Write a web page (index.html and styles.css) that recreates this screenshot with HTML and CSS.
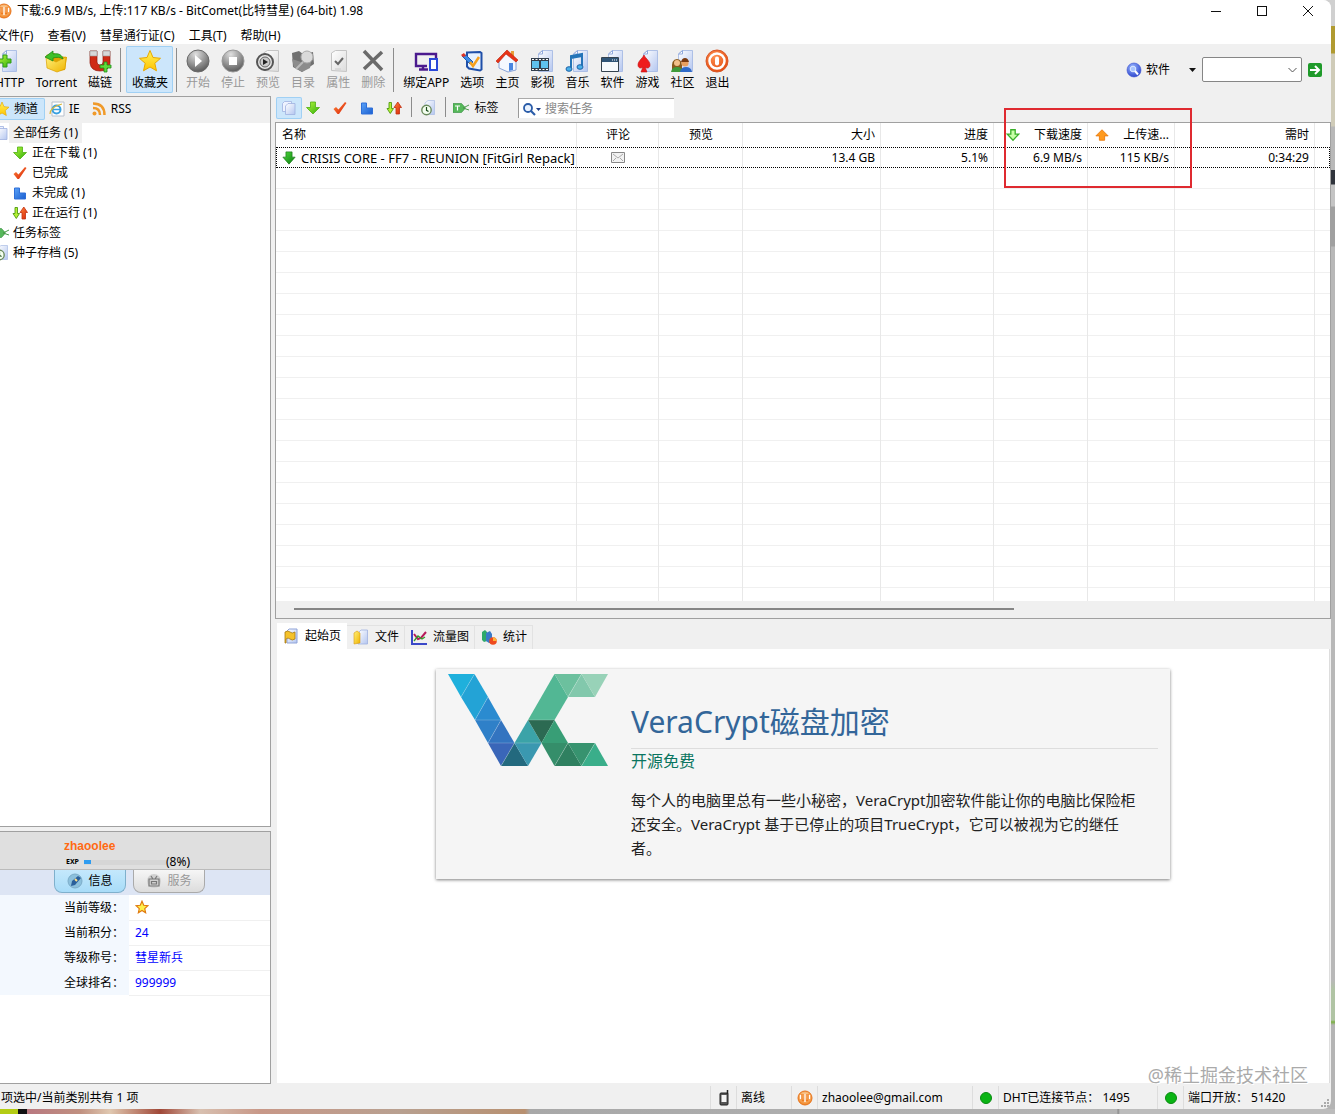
FILE: index.html
```html
<!DOCTYPE html>
<html lang="zh-CN">
<head>
    <meta charset="UTF-8">
    <meta name="viewport" content="width=device-width, initial-scale=1.0">
    <title>BitComet(比特彗星) (64-bit) 1.98</title>
    <link rel="stylesheet" href="styles.css">
</head>
<body>
    <!-- shared icons -->
    <svg class="defs" width="0" height="0">
        <defs>
            <linearGradient id="g-green" x1="0" y1="0" x2="1" y2="1"><stop offset="0" stop-color="#b8f83c"/><stop offset="1" stop-color="#2fae0c"/></linearGradient>
            <linearGradient id="g-dark" x1="0" y1="0" x2="1" y2="1"><stop offset="0" stop-color="#4fdc3a"/><stop offset="1" stop-color="#0b7a12"/></linearGradient>
            <linearGradient id="g-red" x1="0" y1="0" x2="1" y2="1"><stop offset="0" stop-color="#ff8a3c"/><stop offset="1" stop-color="#d81e05"/></linearGradient>
            <linearGradient id="g-blue" x1="0" y1="0" x2="1" y2="1"><stop offset="0" stop-color="#5aa2f8"/><stop offset="1" stop-color="#1b5fd0"/></linearGradient>
            <linearGradient id="g-page" x1="0" y1="0" x2="1" y2="1"><stop offset="0" stop-color="#ffffff"/><stop offset="1" stop-color="#b4c6f0"/></linearGradient>
            <linearGradient id="g-star" x1="0" y1="0" x2="0" y2="1"><stop offset="0" stop-color="#fff25a"/><stop offset="1" stop-color="#ffc400"/></linearGradient>
            <linearGradient id="g-folder" x1="0" y1="0" x2="1" y2="1"><stop offset="0" stop-color="#fff07a"/><stop offset="1" stop-color="#f0b400"/></linearGradient>
            <linearGradient id="g-white" x1="0" y1="0" x2="1" y2="1"><stop offset="0" stop-color="#fff"/><stop offset="1" stop-color="#dcdcdc"/></linearGradient>
            <radialGradient id="g-gray" cx=".4" cy=".2" r=".8"><stop offset="0" stop-color="#e0e0e0"/><stop offset="1" stop-color="#5c5c5c"/></radialGradient>
            <radialGradient id="g-orange" cx=".4" cy=".3" r=".8"><stop offset="0" stop-color="#ff9050"/><stop offset="1" stop-color="#e04408"/></radialGradient>
            <radialGradient id="g-ball" cx=".4" cy=".3" r=".8"><stop offset="0" stop-color="#9ab8ff"/><stop offset="1" stop-color="#2038c8"/></radialGradient>
            <radialGradient id="g-comet" cx=".5" cy=".4" r=".6"><stop offset="0" stop-color="#fff0d0"/><stop offset="1" stop-color="#f0801c"/></radialGradient>
        </defs>
        <symbol id="i-down" viewBox="0 0 16 16"><path d="M5.500 2h5v5.500h4L8 14 1.500 7.500h4z" fill="url(#g-green)" stroke="#4fb012" stroke-width=".8"/></symbol>
        <symbol id="i-downdark" viewBox="0 0 16 16"><path d="M4.500 1h7v6H15l-7 8-7-8h3.500z" fill="url(#g-dark)" stroke="#1b7a1b" stroke-width=".8"/></symbol>
        <symbol id="i-tick" viewBox="0 0 16 16"><path d="M1.500 9l2.500-2 2.500 2.500L13 2l1.500 1L7 14H5.500z" fill="url(#g-red)"/></symbol>
        <symbol id="i-flag" viewBox="0 0 16 16"><path d="M2.500 3h5v5h6v6h-11z" fill="url(#g-blue)" stroke="#2f6fd8"/></symbol>
        <symbol id="i-updown" viewBox="0 0 16 16"><path d="M3 2.500h2.500v6h2L4.300 13.500 1 8.500h2z" fill="#b4f032" stroke="#4f9a12" stroke-width=".9"/><path d="M10 14h3.500V7.500h2L11.800 2 8 7.500h2z" fill="url(#g-red)" stroke="#c03010" stroke-width=".8"/></symbol>
        <symbol id="i-pages" viewBox="0 0 16 16"><path d="M1.500 3.500l2-2h7v10h-9z" fill="#eef3ff" stroke="#9fb1e0" stroke-width=".8"/><path d="M4.500 6L7 3.500h7v11H4.500z" fill="url(#g-page)" stroke="#9fb1e0" stroke-width=".8"/></symbol>
        <symbol id="i-tag" viewBox="0 0 16 14"><path d="M0 2.500h8.500l4 4.500-4 4.500H0z" fill="#56b85a" stroke="#2f8a3a" stroke-width=".6"/><path d="M2 5h5M4.500 5v4.500" stroke="#fff" stroke-width="1.200"/><path d="M10 7l6-3M10 7l6 2" stroke="#4a9a4a" fill="none"/></symbol>
        <symbol id="i-star" viewBox="0 0 24 24"><path d="M12 1.500l3 7 7.500.8-5.700 5 1.700 7.500L12 18l-6.500 3.800 1.700-7.500-5.700-5L9 8.500z" fill="url(#g-star)" stroke="#e8a800"/></symbol>
        <symbol id="i-level" viewBox="0 0 24 24"><path d="M12 2l3 7 7 .8-5.300 5 1.500 7L12 18l-6.200 3.800 1.500-7L2 9.800 9 9z" fill="#fff04a" stroke="#e07a10" stroke-width="2"/></symbol>
        <symbol id="i-clock" viewBox="0 0 16 16"><path d="M5 3l3-2.500h6.500v14H5z" fill="url(#g-page)" stroke="#a9bce4" stroke-width=".7"/><circle cx="6.500" cy="10" r="4.700" fill="#f4fff0" stroke="#6a8a5c" stroke-width="1.400"/><path d="M6.500 7v3.300l2 1.200" stroke="#1d4a1d" fill="none" stroke-width="1.200"/></symbol>
        <symbol id="i-comet" viewBox="0 0 16 16"><circle cx="8" cy="8" r="7" fill="url(#g-comet)" stroke="#e8741c"/><path d="M5 4v5q0 2 1 2t1-2V4M9 4v5q0 2 1 2t1-2V4" fill="none" stroke="#f07818" stroke-width="1.200"/><path d="M3.500 5v4M8 4v8M12.500 5v4" stroke="#fff" stroke-width="1.200"/></symbol>
        <symbol id="i-sheet" viewBox="0 0 24 24"><path d="M8.500 5l4-3.500h10v21h-14z" fill="url(#g-page)" stroke="#9fb5e2" stroke-width=".8"/><path d="M8.500 5h4V1.500z" fill="#fff" stroke="#8fa8dd"/></symbol>
        <symbol id="i-graysheet" viewBox="0 0 24 24"><path d="M5.500 4l4-2.500h11v21l-15-1z" fill="url(#g-white)" stroke="#c4c4c4"/></symbol>
    </svg>

    <div class="desktop">
    <div class="window">
        <header class="titlebar">
            <svg class="icon16"><use href="#i-comet"/></svg>
            <h1>下载:6.9 MB/s, 上传:117 KB/s - BitComet(比特彗星) (64-bit) 1.98</h1>
            <div class="win-buttons">
                <button aria-label="最小化"><svg viewBox="0 0 12 12"><path d="M1 6.500h10"/></svg></button>
                <button aria-label="最大化"><svg viewBox="0 0 12 12"><rect x="1.500" y="1.500" width="9" height="9"/></svg></button>
                <button aria-label="关闭"><svg viewBox="0 0 12 12"><path d="M1 1l10 10M11 1L1 11"/></svg></button>
            </div>
        </header>

        <nav class="menubar">
            <button>文件(F)</button>
            <button>查看(V)</button>
            <button>彗星通行证(C)</button>
            <button>工具(T)</button>
            <button>帮助(H)</button>
        </nav>

        <div class="toolbar">
            <button class="tool">
                <svg viewBox="0 0 24 24"><use href="#i-sheet" x="-4" width="24" height="24"/><path d="M5 6h4v4h4v4H9v4H5v-4H1v-4h4z" fill="url(#g-green)" stroke="#2f9a1a"/></svg>
                <span>HTTP</span>
            </button>
            <button class="tool">
                <svg viewBox="0 0 24 24"><path d="M2 6l8-2 4 3 9 1-2 13-8 1z" fill="#e0a400"/><path d="M2 8l10 5 10-5-1 12-8 3-10-4z" fill="url(#g-folder)" stroke="#dba100" stroke-width=".7"/><path d="M1 8l8-6v3c6-1 9 1 10 5-3-2-6-2-10-1v3z" fill="#3ec02a" stroke="#1d8a18" stroke-width=".8"/></svg>
                <span>Torrent</span>
            </button>
            <button class="tool">
                <svg viewBox="0 0 24 24"><path d="M2 2h7v11q0 3 3 3t3-3V2h7v12q-1 8-10 8T2 14z" fill="#cf2a14" stroke="#8f1408" stroke-width=".7"/><path d="M2 2h7v5H2zM15 2h7v5h-7z" fill="#d8d8d8" stroke="#999" stroke-width=".6"/><path d="M16 13h3v3h4v3h-4v4h-3v-4h-4v-3h4z" fill="#5ddc3a" stroke="#1f8a18" stroke-width=".8"/></svg>
                <span>磁链</span>
            </button>
            <i class="sep"></i>
            <button class="tool active">
                <svg><use href="#i-star"/></svg>
                <span>收藏夹</span>
            </button>
            <i class="sep"></i>
            <button class="tool" disabled>
                <svg viewBox="0 0 24 24"><circle cx="12" cy="12" r="11" fill="url(#g-gray)" stroke="#6a6a6a"/><path d="M9 6l7 6-7 6z" fill="#fff"/></svg>
                <span>开始</span>
            </button>
            <button class="tool" disabled>
                <svg viewBox="0 0 24 24"><circle cx="12" cy="12" r="11" fill="url(#g-gray)" stroke="#9a9a9a"/><path d="M8 8h8v8H8z" fill="#fff"/></svg>
                <span>停止</span>
            </button>
            <button class="tool" disabled>
                <svg viewBox="0 0 24 24"><use href="#i-graysheet" x="2" width="24" height="24"/><circle cx="9" cy="13" r="8" fill="#e4e4e4" stroke="#555" stroke-width="2"/><circle cx="9" cy="13" r="5" fill="#ccc" stroke="#666"/><path d="M7 10l5 3-5 3z" fill="#222"/></svg>
                <span>预览</span>
            </button>
            <button class="tool" disabled>
                <svg viewBox="0 0 24 24"><path d="M1 4l7-2 4 3 10-2 1 12-12 8-9-5z" fill="#707070"/><path d="M1 10l9 3 11-6-2 12-8 4-8-5z" fill="#8c8c8c"/><circle cx="16" cy="8" r="6" fill="#dadada" stroke="#aaa"/><path d="M12 13l-7 7" stroke="#bbb" stroke-width="2"/></svg>
                <span>目录</span>
            </button>
            <button class="tool" disabled>
                <svg viewBox="0 0 24 24"><use href="#i-graysheet" width="24" height="24"/><path d="M9 12l3 3 5-6" fill="none" stroke="#666" stroke-width="2"/><path d="M9 20h6" stroke="#ccc"/></svg>
                <span>属性</span>
            </button>
            <button class="tool" disabled>
                <svg viewBox="0 0 24 24"><path d="M3 2l18 19M21 3L3 20" stroke="#6a6a6a" stroke-width="3.500"/></svg>
                <span>删除</span>
            </button>
            <i class="sep"></i>
            <button class="tool">
                <svg viewBox="0 0 24 24"><path d="M13 17H2V5h20v4M5 20.500h9M9 17v3" fill="none" stroke="#4b1a8e" stroke-width="2.400"/><rect x="16" y="10" width="7" height="11" fill="#fff" stroke="#2b48d8" stroke-width="2"/></svg>
                <span>绑定APP</span>
            </button>
            <button class="tool">
                <svg viewBox="0 0 24 24"><path d="M7 3.500l13-.5 1.500 1v16.500l-1.500 1-11-2-2-2z" fill="#e6f1ff" stroke="#1f4fa8" stroke-width="2"/><path d="M2 7l4-1 7 7-3 2z" fill="#3a8ae8" stroke="#1f5ab0"/><path d="M1 6l3-2 2 3-3 1z" fill="#e03020"/><path d="M10 13l3 4 6-9" fill="none" stroke="#f5a01e" stroke-width="2.500"/></svg>
                <span>选项</span>
            </button>
            <button class="tool">
                <svg viewBox="0 0 24 24"><path d="M16 2h3v6h-3z" fill="#e8a03a"/><path d="M4 11l8-8 9 8v10l-8 2-9-4z" fill="#f4f8ff" stroke="#8aa4d8"/><path d="M12 1L1 12l2 2 8-9 10 8 2-2z" fill="#e83418" stroke="#b81c08" stroke-width=".6"/><path d="M14 14h4v7l-4 1z" fill="#4a86e0"/></svg>
                <span>主页</span>
            </button>
            <button class="tool">
                <svg viewBox="0 0 24 24"><use href="#i-sheet" width="24" height="24"/><path d="M1 9h18v13H1z" fill="#333f4c"/><path d="M2 12h7v7H2zM11 12h7v7h-7z" fill="#5fc2ee"/><path d="M2 10.500h17M2 20.500h17" stroke="#fff" stroke-dasharray="2 1.500"/></svg>
                <span>影视</span>
            </button>
            <button class="tool">
                <svg viewBox="0 0 24 24"><use href="#i-sheet" width="24" height="24"/><path d="M6 19V7l11-2v12M6 9l11-2" fill="none" stroke="#2474b8" stroke-width="2"/><ellipse cx="4" cy="20" rx="3" ry="2.300" fill="#4ab0e8" stroke="#1f62a8"/><ellipse cx="15" cy="18" rx="3" ry="2.300" fill="#4ab0e8" stroke="#1f62a8"/></svg>
                <span>音乐</span>
            </button>
            <button class="tool">
                <svg viewBox="0 0 24 24"><use href="#i-sheet" width="24" height="24"/><path d="M1.500 8.500h17v14h-17z" fill="#f6fafd" stroke="#34424e"/><path d="M2 9h16v4H2z" fill="#2f5578"/><path d="M12 11h1M14 11h1M16 11h1" stroke="#fff"/></svg>
                <span>软件</span>
            </button>
            <button class="tool">
                <svg viewBox="0 0 24 24"><use href="#i-sheet" width="24" height="24"/><path d="M9 6c2 4 6 6 6 10 0 3-3 4-5 2l2 5H6l2-5c-2 2-5 1-5-2 0-4 4-6 6-10z" fill="#ee1c1c" stroke="#c01010" stroke-width=".6"/></svg>
                <span>游戏</span>
            </button>
            <button class="tool">
                <svg viewBox="0 0 24 24"><use href="#i-sheet" width="24" height="24"/><path d="M2 21q-1-11 5-11t5 11z" fill="#8a5a1c"/><circle cx="7" cy="14" r="3" fill="#f3c08a"/><path d="M1 23q1-5 6-5t6 5z" fill="#3f9a3a"/><circle cx="15" cy="14" r="3.600" fill="#e8a060"/><path d="M11 13q1-4 4-4t4 4z" fill="#7a3a10"/><path d="M10 23q1-5 6-5t6 5z" fill="#2f6ac8"/></svg>
                <span>社区</span>
            </button>
            <button class="tool">
                <svg viewBox="0 0 24 24"><circle cx="12" cy="12" r="11" fill="url(#g-orange)" stroke="#d8582a"/><circle cx="12" cy="12" r="7.500" fill="none" stroke="#fff" stroke-width="2.500"/><rect x="10" y="7.500" width="4" height="9" rx="2" fill="#fff"/></svg>
                <span>退出</span>
            </button>

            <div class="finder">
                <button class="finder-type">
                    <svg class="icon16" viewBox="0 0 16 16"><circle cx="8" cy="8" r="7" fill="url(#g-ball)" stroke="#3a52d0" stroke-width=".6"/><circle cx="7" cy="7" r="2.800" fill="#a8c4ff" stroke="#dce8ff"/><path d="M9 9l3 3.500" stroke="#fff" stroke-width="2"/></svg>
                    <span>软件</span>
                    <svg class="caret" viewBox="0 0 7 4"><path d="M0 0h7L3.500 4z" fill="#111"/></svg>
                </button>
                <div class="combo">
                    <select aria-label="搜索"><option></option></select>
                    <svg viewBox="0 0 9 6"><path d="M.5 1l4 4 4-4" fill="none" stroke="#555"/></svg>
                </div>
                <button class="go" aria-label="搜索"><svg viewBox="0 0 14 14"><rect width="14" height="14" rx="2" fill="#1f9a2a"/><path d="M2 7h9M7 3l4 4-4 4" fill="none" stroke="#fff" stroke-width="2"/></svg></button>
            </div>
        </div>

        <div class="main">
            <aside class="sidebar">
                <section class="channels">
                    <div class="side-tabs">
                        <button class="active"><svg class="icon16"><use href="#i-star"/></svg>频道</button>
                        <button><svg class="icon16" viewBox="0 0 16 16"><path d="M3 1h12v14H3z" fill="#fff" stroke="#b8c0cc"/><circle cx="7.500" cy="8.500" r="4" fill="none" stroke="#3aa0e0" stroke-width="2"/><path d="M4 8.500h7" stroke="#3aa0e0" stroke-width="1.500"/><path d="M1 13Q1 6 13 3" fill="none" stroke="#d8b83a" stroke-width="1.200"/></svg>IE</button>
                        <button><svg class="icon16" viewBox="0 0 16 16"><circle cx="3.500" cy="12.500" r="2" fill="#f09a2a"/><path d="M2 7q7 0 7 7M2 2.500q11.500 0 11.500 11.500" fill="none" stroke="#f09a2a" stroke-width="2.500"/></svg>RSS</button>
                    </div>
                    <ul class="tree">
                        <li class="selected"><svg class="icon16"><use href="#i-pages"/></svg><span>全部任务 (1)</span></li>
                        <li class="child"><svg class="icon16"><use href="#i-down"/></svg><span>正在下载 (1)</span></li>
                        <li class="child"><svg class="icon16"><use href="#i-tick"/></svg><span>已完成</span></li>
                        <li class="child"><svg class="icon16"><use href="#i-flag"/></svg><span>未完成 (1)</span></li>
                        <li class="child"><svg class="icon16"><use href="#i-updown"/></svg><span>正在运行 (1)</span></li>
                        <li><svg class="icon16"><use href="#i-tag"/></svg><span>任务标签</span></li>
                        <li><svg class="icon16"><use href="#i-clock"/></svg><span>种子存档 (5)</span></li>
                    </ul>
                </section>

                <section class="account">
                    <div class="account-head">
                        <strong>zhaoolee</strong>
                        <div class="exp"><small>EXP</small><div class="exp-bar"><div style="width: 8%"></div></div><span>(8%)</span></div>
                    </div>
                    <div class="account-tabs">
                        <button class="active"><svg class="icon16" viewBox="0 0 16 16"><circle cx="8" cy="8" r="7" fill="#8cc0dc" stroke="#7cacc8"/><path d="M5 8l6-5 3 2-6 7-4 1z" fill="#2a5f9a"/><path d="M8 6l2 2" stroke="#ffe08a" stroke-width="2"/></svg>信息</button>
                        <button><svg class="icon16" viewBox="0 0 16 16"><circle cx="8" cy="8" r="7" fill="#d0d0d0"/><path d="M3 6h10v7H3zM5.500 8.500h5v2.500h-5zM5 3l2 3M11 3L9 6" fill="none" stroke="#777" stroke-width="1.200"/></svg>服务</button>
                    </div>
                    <table class="account-info">
                        <tr><th>当前等级：</th><td><svg class="icon14"><use href="#i-level"/></svg></td></tr>
                        <tr><th>当前积分：</th><td>24</td></tr>
                        <tr><th>等级称号：</th><td>彗星新兵</td></tr>
                        <tr><th>全球排名：</th><td>999999</td></tr>
                    </table>
                </section>
            </aside>

            <div class="content">
                <div class="filters">
                    <button class="filter active" aria-label="全部任务"><svg class="icon16"><use href="#i-pages"/></svg></button>
                    <button class="filter" aria-label="正在下载"><svg class="icon16"><use href="#i-down"/></svg></button>
                    <button class="filter" aria-label="已完成"><svg class="icon16"><use href="#i-tick"/></svg></button>
                    <button class="filter" aria-label="未完成"><svg class="icon16"><use href="#i-flag"/></svg></button>
                    <button class="filter" aria-label="正在运行"><svg class="icon16"><use href="#i-updown"/></svg></button>
                    <i class="sep"></i>
                    <button class="filter" aria-label="种子存档"><svg class="icon16"><use href="#i-clock"/></svg></button>
                    <i class="sep"></i>
                    <button class="filter tag"><svg class="icon16"><use href="#i-tag"/></svg>标签</button>
                    <div class="search">
                        <svg viewBox="0 0 18 14"><circle cx="5" cy="6" r="4" fill="#eaf3ff" stroke="#2a5ca8" stroke-width="1.800"/><path d="M8 9l4 4" stroke="#2a5ca8" stroke-width="2.200"/><path d="M13 6h5l-2.500 3z" fill="#1f3f88"/></svg>
                        <input type="text" placeholder="搜索任务" aria-label="搜索任务">
                    </div>
                </div>

                <div class="tasks">
                    <table class="task-table">
                        <colgroup>
                            <col class="c-name"><col class="c-comment"><col class="c-preview"><col class="c-size"><col class="c-progress"><col class="c-down"><col class="c-up"><col class="c-time"><col>
                        </colgroup>
                        <thead>
                            <tr>
                                <th class="left">名称</th>
                                <th class="center">评论</th>
                                <th class="center">预览</th>
                                <th>大小</th>
                                <th>进度</th>
                                <th><div class="speed"><svg viewBox="0 0 16 16"><path d="M5.500 2h5v5h4L8 14 1.500 7h4z" fill="#c8ffa8" stroke="#3ab02a" stroke-width="1.500"/></svg>下载速度</div></th>
                                <th><div class="speed"><svg viewBox="0 0 16 16"><path d="M5 14h6V9h4L8 2 1 9h4z" fill="#ff9a1e" stroke="#e87a10"/></svg>上传速...</div></th>
                                <th>需时</th>
                                <th></th>
                            </tr>
                        </thead>
                        <tbody>
                            <tr class="task">
                                <td class="left"><div class="task-name"><svg><use href="#i-downdark"/></svg>CRISIS CORE - FF7 - REUNION [FitGirl Repack]</div></td>
                                <td class="center"><svg class="mail" viewBox="0 0 14 11"><path d="M.5.5h13v10H.5z" fill="#f2f2f2" stroke="#888"/><path d="M2 2l5 4 5-4M2 9l3-3M12 9L9 6" fill="none" stroke="#aaa"/></svg></td>
                                <td></td>
                                <td>13.4 GB</td>
                                <td>5.1%</td>
                                <td>6.9 MB/s</td>
                                <td>115 KB/s</td>
                                <td>0:34:29</td>
                                <td></td>
                            </tr>
                            <tr class="blank"><td></td><td></td><td></td><td></td><td></td><td></td><td></td><td></td><td></td></tr>
                        </tbody>
                    </table>
                    <div class="hscroll"><div></div></div>
                    <div class="mark"></div>
                </div>

                <div class="detail-tabs">
                    <button class="active"><svg class="icon16" viewBox="0 0 16 16"><path d="M4 3l2-2h8v14H4z" fill="url(#g-page)" stroke="#8fa3d8"/><path d="M2 4q3-2 5 0t5 0v7q-3 2-5 0t-4 0v4H2z" fill="#f5c22a" stroke="#a87a10" stroke-width=".8"/></svg>起始页</button>
                    <button><svg class="icon16" viewBox="0 0 16 16"><path d="M5 4l3-3h6.500v14H5z" fill="url(#g-page)" stroke="#9fb1e0" stroke-width=".8"/><path d="M1 4l3-2 3 2v10l-6 1z" fill="url(#g-folder)" stroke="#d89a10" stroke-width=".6"/></svg>文件</button>
                    <button><svg class="icon16" viewBox="0 0 16 16"><path d="M1 1v14h15" fill="none" stroke="#3a48c8" stroke-width="2"/><path d="M3 5l4 5 3-1 5-6" fill="none" stroke="#b81a5a" stroke-width="2"/><path d="M3 12l4-5 4 3 3-2" fill="none" stroke="#2f9a2a" stroke-width="1.300"/></svg>流量图</button>
                    <button><svg class="icon16" viewBox="0 0 16 16"><path d="M1 3l3-2 2 2v9l-3 1-2-2z" fill="#2faa6a"/><path d="M5 4l4-2 2 3v9H8l-3-2z" fill="#3a7ac8"/><circle cx="12" cy="12" r="3.800" fill="#ee4a1e"/><path d="M12 12V8.200a4 4 0 0 1 3.800 3.800z" fill="#ffb43a"/></svg>统计</button>
                </div>

                <div class="start-page">
                    <article class="card">
                        <!-- VeraCrypt logo -->
                        <svg class="card-logo" viewBox="0 0 160 92">
                            <path d="M0 0h26.500L13 23z" fill="#1fb0dc"/>
                            <path d="M26.500 0L40 23 27 46 13 23z" fill="#23a3d6"/>
                            <path d="M40 23l13 23H27z" fill="#2a8bd0"/>
                            <path d="M27 46h26L40 69z" fill="#2f80c8"/>
                            <path d="M53 46l13.500 23H40z" fill="#3374c0"/>
                            <path d="M40 69h26.500L53 92z" fill="#3a66b8"/>
                            <path d="M66.500 69L80 92H53z" fill="#23697e"/>
                            <path d="M66.500 69h27L80 92z" fill="#3a98b0"/>
                            <path d="M80 46l13.500 23h-27z" fill="#3ba3a8"/>
                            <path d="M80 46h26.500L93.500 69z" fill="#2c6a52"/>
                            <path d="M106.500 0L120 23l-13.500 23H80z" fill="#52b794"/>
                            <path d="M106.500 0h27L120 23z" fill="#6cc09e"/>
                            <path d="M133.500 0L147 23h-27z" fill="#82c8ac"/>
                            <path d="M133.500 0H160l-13 23z" fill="#98d2b8"/>
                            <path d="M106.500 46L120 69H93.500z" fill="#389e76"/>
                            <path d="M93.500 69H120l-13.500 23z" fill="#358e6a"/>
                            <path d="M120 69l13.500 23h-27z" fill="#2f8060"/>
                            <path d="M120 69h27l-13.500 23z" fill="#37936f"/>
                            <path d="M147 69l13 23h-26.500z" fill="#3aae8a"/>
                            <path d="M13 23L26.500 0M27 46l13-23M27 46h26L40 69h53.500M80 46h26.500M66.500 69L53 92M120 23l13.500-23M120 69l-13.500 23M147 69l-13.500 23" fill="none" stroke="#fff" stroke-opacity=".35" stroke-width=".6"/>
                        </svg>
                        <div class="card-body">
                            <h2>VeraCrypt磁盘加密</h2>
                            <h3>开源免费</h3>
                            <p>每个人的电脑里总有一些小秘密，VeraCrypt加密软件能让你的电脑比保险柜<br>还安全。VeraCrypt 基于已停止的项目TrueCrypt，它可以被视为它的继任<br>者。</p>
                        </div>
                    </article>
                    <div class="watermark">@稀土掘金技术社区</div>
                </div>
            </div>
        </div>

        <footer class="statusbar">
            <div class="status-text">项选中/当前类别共有 1 项</div>
            <div class="status-icon"><svg class="icon16" viewBox="0 0 16 16"><rect x="4" y="3" width="8" height="12" rx="1" fill="#555" stroke="#222"/><path d="M5.500 5h5v7h-5z" fill="#f4f4f4"/><path d="M11.500 0v4" stroke="#222" stroke-width="1.500"/></svg></div>
            <div>离线</div>
            <div class="status-icon"><svg class="icon16"><use href="#i-comet"/></svg></div>
            <div>zhaoolee@gmail.com</div>
            <div class="status-icon"><i class="dot"></i></div>
            <div>DHT已连接节点： 1495</div>
            <div class="status-icon"><i class="dot"></i></div>
            <div>端口开放： 51420</div>
            <svg class="grip" viewBox="0 0 8 8"><path d="M6 0h2v2H6zM6 3h2v2H6zM6 6h2v2H6zM3 3h2v2H3zM3 6h2v2H3zM0 6h2v2H0z" fill="#aaa"/></svg>
        </footer>
    </div>
    </div>
</body>
</html>
```
FILE: styles.css
```css
* {
    box-sizing: border-box;
}
body {
    margin: 0;
    overflow: hidden;
    font-family: "Noto Sans", "Noto Sans CJK SC", sans-serif;
    font-size: 12px;
    line-height: 16px;
    color: #000;
}
button,
input,
select {
    font: inherit;
    color: inherit;
    border: 0;
    padding: 0;
    margin: 0;
    background: none;
}
h1, h2, h3, p, ul {
    margin: 0;
    padding: 0;
    font-weight: normal;
}
svg {
    display: block;
    flex: none;
}
.defs {
    position: absolute;
}
.icon16 {
    width: 16px;
    height: 16px;
}
.icon14 {
    width: 14px;
    height: 14px;
}

/* what shows behind the window, at the right and bottom */
.desktop {
    height: 100vh;
    padding: 0 4px 5px 0;
    background:
        linear-gradient(90deg, #b4cc14 0 18px, #111 18px 27px, #b87880 27px, #c09080 80px, #e0c8b0 110px, #a04838 160px, #d8c0b0 200px, #c89888 260px, #b8a090 400px, #b89070 525px, #a8a8a8 530px, #b4b4b4 1117px, #888 1118px, #bcbcbc 1120px) bottom / 100% 5px no-repeat,
        linear-gradient(#d0d0d0 0 26px, #b09a30 26px 53px, #cfcbb8 54px 126px, #b8b8b8 127px 170px, #30343c 170px 184px, #c4c4c4 185px 206px, #a0a0a0 207px 246px, #b8b8b8 247px 980px, #b0c4a4 990px 1020px, #7ab040 1022px, #b4b4b4 1025px);
}
/* the window hangs 8px past the left edge of the screen */
.window {
    display: flex;
    flex-direction: column;
    height: 100%;
    margin-left: -8px;
    background: #f0f0f0;
    border-radius: 0 8px 8px 0;
    overflow: hidden;
    position: relative;
}

.titlebar {
    display: flex;
    align-items: center;
    height: 24px;
    padding: 0 0 3px 4px;
    background: #fff;
}
.titlebar h1 {
    flex: 1;
    padding-left: 5px;
    font-size: 12px;
}
.win-buttons {
    display: flex;
}
.win-buttons button {
    display: flex;
    justify-content: center;
    width: 46px;
}
.win-buttons svg {
    width: 12px;
    height: 12px;
    fill: none;
    stroke: #111;
}
.menubar {
    display: flex;
    gap: 14px;
    height: 20px;
    padding: 3px 0 0 4px;
    background: #fff;
}

.toolbar {
    display: flex;
    align-items: center;
    height: 52px;
    margin-left: -3px;
    padding-bottom: 1px;
}
.tool {
    display: flex;
    flex-direction: column;
    align-items: center;
    gap: 2px;
    height: 47px;
    min-width: 35px;
    padding: 3px 5px 0 6px;
    white-space: nowrap;
}
.tool svg {
    width: 24px;
    height: 24px;
}
.tool:disabled {
    color: #999;
}
.tool.active,
.filter.active,
.side-tabs .active {
    background: #cce6fb;
    box-shadow: inset 0 0 0 1px #a0d0f4;
    border-radius: 2px;
}
.tool.active {
    margin-left: 2px;
}
.sep {
    width: 1px;
    height: 44px;
    margin: 0 3px;
    background: #8c8c8c;
}

.finder {
    display: flex;
    align-items: center;
    gap: 6px;
    margin-left: auto;
    padding-right: 9px;
}
.finder-type {
    display: flex;
    align-items: center;
    gap: 4px;
}
.caret {
    width: 7px;
    height: 4px;
    margin-left: 15px;
}
.combo {
    position: relative;
}
.combo select {
    display: block;
    width: 100px;
    height: 25px;
    appearance: none;
    background: #fff;
    border: 1px solid #868686;
    border-radius: 2px;
}
.combo svg {
    position: absolute;
    right: 5px;
    top: 10px;
    width: 9px;
    height: 6px;
}
.go svg {
    width: 14px;
    height: 14px;
}

.main {
    flex: 1;
    display: flex;
    gap: 4px;
    min-height: 0;
}
.sidebar {
    display: flex;
    flex-direction: column;
    gap: 4px;
    width: 279px;
    flex: none;
}
.channels {
    flex: 1;
    border: 1px solid #a0a0a0;
    background: #fff;
}
.side-tabs {
    display: flex;
    height: 26px;
    background: #f0f0f0;
}
.side-tabs button {
    display: flex;
    align-items: center;
    gap: 4px;
    height: 22px;
    margin-top: 1px;
    padding: 0 7px 0 4px;
}
.side-tabs .active {
    padding-left: 1px;
}
.tree {
    list-style: none;
}
.tree li {
    display: flex;
    align-items: center;
    height: 20px;
}
.tree .child {
    padding-left: 19px;
}
.tree span {
    padding: 2px 4px;
}
.tree .selected span {
    background: #f0f0f0;
}

.account {
    min-height: 253px;
    border: 1px solid #a0a0a0;
    background: #fff;
}
.account-head {
    height: 38px;
    padding: 6px 0 0 71px;
    background: #dfdfdf;
    border-bottom: 1px solid #bbb;
}
.account-head strong {
    display: block;
    font-family: "Liberation Sans", Arial, sans-serif;
    color: #ff6a13;
}
.exp {
    display: flex;
    align-items: center;
    height: 16px;
    padding-left: 2px;
}
.exp small {
    width: 18px;
    font-size: 7px;
    font-weight: bold;
}
.exp-bar {
    width: 82px;
    height: 5px;
    background: #d6d6d6;
}
.exp-bar div {
    height: 4px;
    background: #2f9cf0;
}
.account-tabs {
    display: flex;
    gap: 7px;
    height: 25px;
    padding-left: 61px;
    background: #dde5f4;
}
.account-tabs button {
    display: flex;
    align-items: center;
    justify-content: center;
    gap: 5px;
    width: 72px;
    height: 23px;
    color: #999;
    background: linear-gradient(#f6f6f6, #dcdcdc);
    border: 1px solid #aaa;
    border-top: 0;
    border-radius: 0 0 8px 8px;
}
.account-tabs .active {
    color: #000;
    background: linear-gradient(#c4e8fc, #a8dcf8);
    border-color: #7fb0cc;
}
.account-info {
    width: 100%;
    border-collapse: collapse;
}
.account-info th {
    width: 136px;
    height: 25px;
    padding: 0 5px 0 0;
    font-weight: normal;
    text-align: right;
    background: #f3f8fe;
}
.account-info td {
    padding: 0 0 0 6px;
    color: #00f;
    border-bottom: 1px solid #f0f0f0;
}

.content {
    flex: 1;
    display: flex;
    flex-direction: column;
    min-width: 0;
}
.filters {
    display: flex;
    height: 26px;
    padding: 1px 0 0 1px;
}
.filter {
    display: flex;
    align-items: center;
    justify-content: center;
    gap: 5px;
    width: 26px;
    height: 22px;
    margin-right: 1px;
}
.filter.active {
    margin-right: -2px;
}
.filter.tag {
    width: 54px;
}
.filters .sep {
    height: 20px;
    margin: 0 3px;
}
.search {
    display: flex;
    align-items: center;
    gap: 4px;
    width: 156px;
    height: 20px;
    margin: 1px 0 0 14px;
    padding-left: 4px;
    background: #fff;
    border-top: 1px solid #aaa;
    border-left: 1px solid #999;
}
.search svg {
    width: 18px;
    height: 14px;
}
.search input {
    flex: 1;
    min-width: 0;
    outline: 0;
}
.search input::placeholder {
    color: #888;
}

.tasks {
    position: relative;
    display: flex;
    flex-direction: column;
    flex: 497 1 0;
    background: #fff;
    border: 1px solid #a0a0a0;
}
.task-table {
    flex: 1;
    display: table;
    width: 100%;
    height: 1px;
    table-layout: fixed;
    border-collapse: separate;
    border-spacing: 0;
}
.c-name { width: 301px; }
.c-comment { width: 82px; }
.c-preview { width: 84px; }
.c-size { width: 138px; }
.c-progress { width: 113px; }
.c-down { width: 94px; }
.c-up { width: 87px; }
.c-time { width: 140px; }
.task-table th,
.task-table td {
    padding: 0 5px 0 6px;
    border-right: 1px solid #e8e8e8;
    font-weight: normal;
    text-align: right;
    white-space: nowrap;
}
.task-table th {
    height: 24px;
}
.task-table .left {
    text-align: left;
}
.task-table .center {
    text-align: center;
}
.task-table th:last-child,
.task-table td:last-child {
    border-right: 0;
}
.speed {
    display: flex;
    align-items: center;
    justify-content: flex-end;
    gap: 14px;
}
.speed svg {
    width: 14px;
    height: 14px;
}
.task {
    height: 21px;
    outline: 1px dotted #000;
    outline-offset: -1px;
}
.task-name {
    display: flex;
    align-items: center;
    gap: 5px;
    font-size: 13px;
}
.task-name svg {
    width: 14px;
    height: 14px;
}
.mail {
    width: 14px;
    height: 11px;
    margin: 0 auto;
}
.task-table .blank td {
    background: repeating-linear-gradient(#fff 0 20px, #f0f0f0 20px 21px);
}
.hscroll {
    display: flex;
    align-items: center;
    height: 17px;
    padding-left: 18px;
    background: #f0f0f0;
}
.hscroll div {
    width: 69.5%;
    height: 2px;
    background: #868686;
}
.mark {
    position: absolute;
    top: -15px;
    right: 138px;
    width: 188px;
    height: 80px;
    border: 2px solid #df2a30;
}

.detail-tabs {
    display: flex;
    align-items: flex-end;
    height: 30px;
    padding: 0 0 0 2px;
}
.detail-tabs button {
    display: flex;
    align-items: center;
    gap: 6px;
    height: 24px;
    padding: 0 5px 0 6px;
    border: 1px solid #e2e2e2;
    border-width: 1px 1px 0 0;
}
.detail-tabs .active {
    height: 26px;
    background: #fff;
    border-color: #fff;
}
.start-page {
    position: relative;
    flex: 436 1 0;
    margin: 0 1px 1px 2px;
    background: #fff;
    border-right: 1px solid #ddd;
}
.card {
    display: flex;
    gap: 23px;
    max-width: 734px;
    margin: 20px auto;
    padding: 5px 12px 19px;
    background: #f5f5f5;
    box-shadow: 0 1px 3px rgba(0, 0, 0, 0.5);
}
.card-logo {
    width: 160px;
    height: 92px;
}
.card-body {
    flex: 1;
    font-size: 15px;
    line-height: 24px;
    color: #222;
}
.card h2 {
    padding: 28px 0 6px;
    font-size: 30px;
    line-height: 40px;
    color: #336699;
    border-bottom: 1px solid #ddd;
}
.card h3 {
    font-size: 16px;
    color: #0a7560;
}
.card p {
    padding-top: 15px;
    white-space: nowrap;
}
.watermark {
    position: absolute;
    right: 21px;
    bottom: -4px;
    font-size: 18px;
    line-height: 24px;
    color: #aaa;
    text-shadow: 1px 1px 0 #fff;
}

.statusbar {
    position: relative;
    display: grid;
    grid-template-columns: 1fr 26px 55px 26px 155px 26px 159px 26px 148px;
    height: 25px;
    padding: 2px 0 0 9px;
}
.statusbar div {
    display: flex;
    align-items: center;
    padding-left: 4px;
    border-left: 1px solid #ddd;
    white-space: pre;
}
.statusbar .status-text {
    padding: 0;
    border: 0;
}
.statusbar .status-icon {
    justify-content: center;
    padding: 0;
}
.dot {
    width: 12px;
    height: 12px;
    border-radius: 50%;
    background: #0ab414;
    border: 1px solid #088a10;
}
.grip {
    position: absolute;
    right: 2px;
    bottom: 2px;
    width: 8px;
    height: 8px;
}
```
